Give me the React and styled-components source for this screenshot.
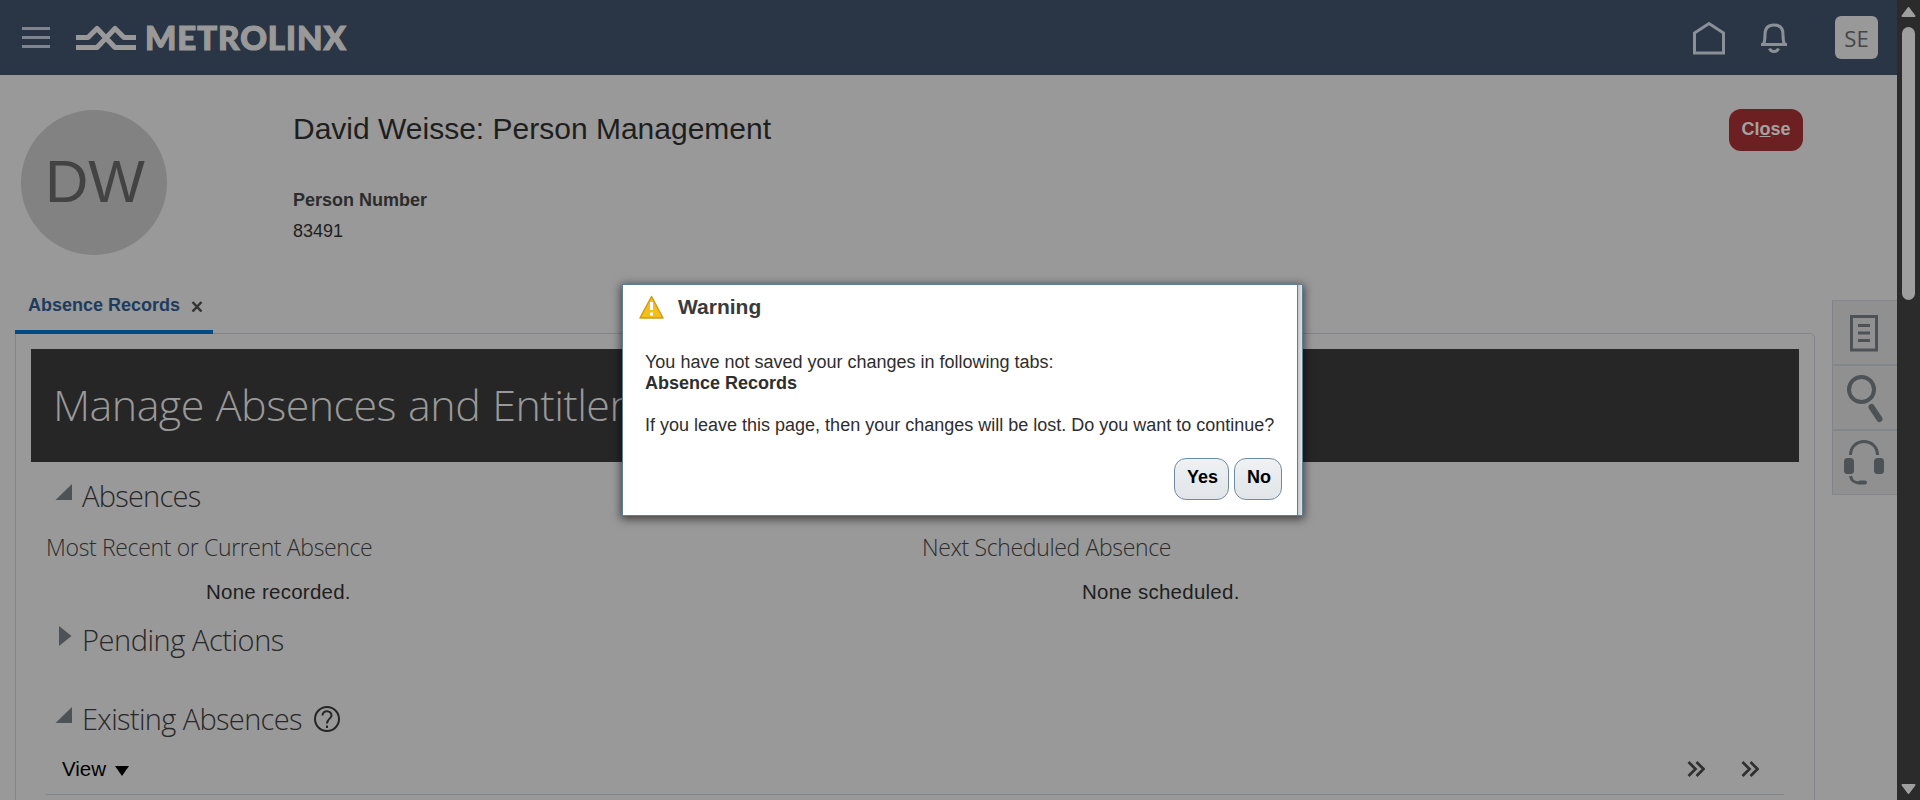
import React from "react";
import styled, { createGlobalStyle } from "styled-components";

const Global = createGlobalStyle`
  * { box-sizing: border-box; }
  html, body { margin: 0; }
  body {
    background: #999;
    color: #1e1e1e;
    font-family: "Liberation Sans", Arial, sans-serif;
    overflow: hidden;
  }
`;

const Screen = styled.div`
  position: relative;
  display: flex;
  width: 1920px;
  height: 800px;
  overflow: hidden;
`;
const Page = styled.div`
  display: flex;
  flex-direction: column;
  width: 1897px;
  background: #999;
`;

const TopBar = styled.header`
  display: flex;
  align-items: center;
  flex: none;
  height: 75px;
  padding: 0 19px 0 22px;
  background: #2a3545;
`;
const Burger = styled.div`
  display: grid;
  gap: 6px;
  width: 28px;
  margin-right: 26px;
`;
const BurgerLine = styled.i`
  height: 3px;
  background: #7f858f;
`;
const Brand = styled.div`
  display: flex;
  align-items: center;
  gap: 9px;
  flex: 1;
`;
const BrandName = styled.span`
  margin-top: -1px;
  color: #999;
  font: 900 33px/40px Lato, sans-serif;
  letter-spacing: ${(p) => p.$track};
  -webkit-text-stroke: 1.2px #999;
  white-space: nowrap;
`;
const TopIcon = styled.svg`
  display: block;
  flex: none;
  margin-right: ${(p) => p.$after}px;
`;
const UserBadge = styled.div`
  display: grid;
  place-items: center;
  width: 43px;
  height: 43px;
  border-radius: 6px;
  background: #999;
  color: #464646;
  font: 22px/1 "Open Sans", sans-serif;
`;

const PersonHeader = styled.section`
  display: flex;
  flex: none;
  height: 210px;
  padding: 35px 94px 0 21px;
`;
const Avatar = styled.div`
  display: flex;
  align-items: center;
  justify-content: center;
  flex: none;
  width: 146px;
  height: 145px;
  margin-right: 126px;
  padding: 0 0 2px 2px;
  border-radius: 50%;
  background: #828282;
  color: #434343;
  font-size: 60px;
`;
const PersonInfo = styled.div`
  flex: 1;
`;
const PersonTitle = styled.h1`
  margin: 1px 0 0;
  font-size: 30px;
  font-weight: 400;
  line-height: 36px;
`;
const FieldLabel = styled.div`
  margin-top: 42px;
  color: #2c2c2c;
  font-size: 18px;
  font-weight: 700;
  line-height: 22px;
`;
const FieldValue = styled.div`
  margin-top: 9px;
  font-size: 18px;
  line-height: 22px;
`;
const CloseButton = styled.button`
  width: 74px;
  height: 42px;
  margin-top: -1px;
  padding: 0 0 2px;
  border: 0;
  border-radius: 12px;
  background: #6c2022;
  color: #a5a2a2;
  font: 700 18px "Liberation Sans", sans-serif;
`;

const Workspace = styled.main`
  display: flex;
  align-items: flex-start;
  flex: 1;
  padding-left: 15px;
`;
const TabColumn = styled.div`
  width: 1800px;
`;
const Tab = styled.div`
  position: relative;
  z-index: 1;
  display: flex;
  width: 162px;
  min-width: 162px;
  height: 49px;
  margin-bottom: -1px;
  padding: 9px 0 0 13px;
  border-bottom: 4px solid #004a85;
  color: #1d3c5e;
  font-size: 18px;
  font-weight: 700;
  line-height: 22px;
  white-space: nowrap;
  width: 198px;
`;
const TabClose = styled.svg`
  flex: none;
  margin: 7px 0 0 11px;
`;
const Panel = styled.div`
  height: 480px;
  padding: 15px 15px 0;
  border: 1px solid #82868a;
  border-top-right-radius: 5px;
`;
const Banner = styled.div`
  height: 113px;
  padding-left: 22px;
  background: #262626;
  color: #999;
  font: 300 43px/111px "Open Sans", "Noto Sans", sans-serif;
  letter-spacing: ${(p) => p.$track};
  word-spacing: 1.5px;
  white-space: nowrap;
`;
const SectionHead = styled.div`
  display: flex;
  align-items: center;
  height: 40px;
  margin-top: ${(p) => p.$before}px;
  padding-left: 24px;
`;
const Marker = styled.svg`
  flex: none;
  width: 18px;
  height: 22px;
  margin: -8px 9px 0 0;
`;
const SectionTitle = styled.h2`
  margin: 0 12px 0 0;
  color: #282828;
  font: 300 29px/40px "Open Sans", "Noto Sans", sans-serif;
  letter-spacing: ${(p) => p.$track};
`;
const AbsenceColumns = styled.div`
  display: grid;
  grid-template-columns: 876px 1fr;
  padding: 13px 0 0 15px;
`;
const SubTitle = styled.h3`
  margin: 0;
  color: #2c2c2c;
  font: 300 23px/36px "Open Sans", "Noto Sans", sans-serif;
  letter-spacing: ${(p) => p.$track};
  white-space: nowrap;
`;
const EmptyNote = styled.p`
  margin: 15px 0 0 160px;
  font-size: 20.5px;
  line-height: 24px;
  letter-spacing: 0.25px;
`;
const TableToolbar = styled.div`
  display: flex;
  align-items: center;
  width: 1738px;
  height: 55px;
  margin: 1px 0 0 15px;
  padding: 3px 25px 0 16px;
  border-bottom: 1px solid #7e858b;
  color: #000;
  font-size: 20.5px;
`;
const ViewMenu = styled.div`
  display: flex;
  align-items: center;
  gap: 9px;
  flex: 1;
`;
const MenuArrow = styled.svg`
  margin-top: 4px;
`;
const Chevrons = styled.svg`
  margin-left: ${(p) => p.$before}px;
`;

const ToolRail = styled.aside`
  width: 65px;
  margin: 15px 0 0 17px;
  border: 1px solid #82868a;
  border-right: 0;
`;
const RailButton = styled.div`
  display: grid;
  height: ${(p) => p.$h}px;
  background: #909090;
  & + & { border-top: 2px solid #82868a; }
`;

const ScrollTrack = styled.div`
  display: flex;
  flex-direction: column;
  align-items: center;
  width: 23px;
  padding: 6px 0 5px;
  background: #2b2b2b;
`;
const ScrollThumb = styled.div`
  width: 13px;
  height: 273px;
  margin-top: 9px;
  margin-bottom: auto;
  border-radius: 7px;
  background: #9f9f9f;
`;

const Dialog = styled.div`
  position: absolute;
  left: 622px;
  top: 284px;
  width: 681px;
  height: 232px;
  padding-right: 4px;
  border: 1px solid #5f7f99;
  background: linear-gradient(90deg, #bcbcbc, #e2e2e2) right / 5px 100% no-repeat #fff;
  box-shadow: 0 2px 9px 1px rgba(0, 0, 0, 0.6);
`;
const DialogBody = styled.div`
  display: flex;
  flex-direction: column;
  height: 230px;
  padding: 9px 15px 0 16px;
  border-right: 1px solid #5f7f99;
  background: #fff;
`;
const DialogHead = styled.div`
  display: flex;
  align-items: center;
  height: 26px;
  gap: 14px;
`;
const DialogTitle = styled.h2`
  margin: 0;
  color: #3a3a3a;
  font-size: 21px;
  line-height: 26px;
`;
const DialogText = styled.p`
  margin: ${(p) => p.$before}px 0 0 6px;
  color: #2e2e2e;
  font-size: 18px;
  font-weight: ${(p) => (p.$strong ? 700 : 400)};
  line-height: 21px;
  white-space: nowrap;
`;
const DialogActions = styled.div`
  display: flex;
  justify-content: flex-end;
  gap: 5px;
  margin-top: 22px;
`;
const DialogButton = styled.button`
  width: ${(p) => p.$w}px;
  height: 42px;
  padding: 0 0 3px 2px;
  border: 1px solid #6f8ba3;
  border-radius: 12px;
  background: linear-gradient(#eff1f2, #e1e5e9);
  color: #000;
  font: 700 18px "Liberation Sans", sans-serif;
`;

const OpenMarker = () => (
  <Marker viewBox="0 0 18 22"><path d="M17 3v16H0.5z" fill="#4d5256" /></Marker>
);
const ClosedMarker = () => (
  <Marker viewBox="0 0 18 22"><path d="M4 1l12.500 10L4 21z" fill="#4d5256" /></Marker>
);
const More = ({ before }) => (
  <Chevrons $before={before} width="18" height="16" fill="none" stroke="#303030" strokeWidth="2.700">
    <path d="M1.500 1l7 7-7 7M9.500 1l7 7-7 7" />
  </Chevrons>
);

export default function App() {
  return (
    <Screen>
      <Global />
      <Page>
        <TopBar>
          <Burger><BurgerLine /><BurgerLine /><BurgerLine /></Burger>
          <Brand>
            <svg width="60" height="26" fill="none" stroke="#999" strokeWidth="5.200" strokeLinejoin="round">
              <path d="M0 12.500h12L21 3.500l18 19h21M0 22.500h21L39 3.500l9 9h12" />
            </svg>
            <BrandName $track="0.95px">METROLINX</BrandName>
          </Brand>
          <TopIcon $after={34} width="34" height="34" fill="none" stroke="#8a9098" strokeWidth="3">
            <path d="M2.500 12L17 2.500 31.500 12v20h-29z" />
          </TopIcon>
          <TopIcon $after={47} width="28" height="32" fill="none" stroke="#8a9098" strokeWidth="3">
            <path d="M1 22.500h26M3.500 22.500C5 19 5 16 5 12.500 5 6 8.500 3 14 3s9 3 9 9.500c0 3.500 0 6.500 1.500 10M9.500 26.500c1.500 4 7.500 4 9 0" />
          </TopIcon>
          <UserBadge>SE</UserBadge>
        </TopBar>

        <PersonHeader>
          <Avatar>DW</Avatar>
          <PersonInfo>
            <PersonTitle>David Weisse: Person Management</PersonTitle>
            <FieldLabel>Person Number</FieldLabel>
            <FieldValue>83491</FieldValue>
          </PersonInfo>
          <CloseButton>Cl<u>o</u>se</CloseButton>
        </PersonHeader>

        <Workspace>
          <TabColumn>
            <Tab>
              Absence Records
              <TabClose width="12" height="11" stroke="#343434" strokeWidth="2.500"><path d="M1.500 1l9 9.500M10.500 1l-9 9.500" /></TabClose>
            </Tab>
            <Panel>
              <Banner $track="-0.55px">Manage Absences and Entitlements</Banner>
              <SectionHead $before={14}>
                <OpenMarker />
                <SectionTitle $track="-0.75px">Absences</SectionTitle>
              </SectionHead>
              <AbsenceColumns>
                <div>
                  <SubTitle $track="-0.35px">Most Recent or Current Absence</SubTitle>
                  <EmptyNote>None recorded.</EmptyNote>
                </div>
                <div>
                  <SubTitle $track="-0.35px">Next Scheduled Absence</SubTitle>
                  <EmptyNote>None scheduled.</EmptyNote>
                </div>
              </AbsenceColumns>
              <SectionHead $before={16}>
                <ClosedMarker />
                <SectionTitle $track="-0.45px">Pending Actions</SectionTitle>
              </SectionHead>
              <SectionHead $before={39}>
                <OpenMarker />
                <SectionTitle $track="-0.65px">Existing Absences</SectionTitle>
                <svg width="26" height="26" fill="none" stroke="#252525" strokeWidth="2">
                  <circle cx="13" cy="13" r="12" />
                  <path d="M8.500 9.500C8.500 3.500 17.500 4 17.500 9.500c0 3-4.500 3.500-4.500 8M13 19.500v2.500" />
                </svg>
              </SectionHead>
              <TableToolbar>
                <ViewMenu>
                  View
                  <MenuArrow width="14" height="10"><path d="M0 0h14L7 10z" fill="#000" /></MenuArrow>
                </ViewMenu>
                <More before={0} />
                <More before={36} />
              </TableToolbar>
            </Panel>
          </TabColumn>

          <ToolRail>
            <RailButton $h={63}>
              <svg width="64" height="63" fill="none" stroke="#4d5256" strokeWidth="3">
                <path d="M18.500 15.500h25v33.500h-25zM25 24.500h12M25 32h12M25 39.500h12" />
              </svg>
            </RailButton>
            <RailButton $h={65}>
              <svg width="64" height="63" fill="none" stroke="#4d5256">
                <circle cx="28.500" cy="23.500" r="12.500" strokeWidth="4" />
                <path d="M38.500 41l8 12" strokeWidth="6" strokeLinecap="round" />
              </svg>
            </RailButton>
            <RailButton $h={65}>
              <svg width="64" height="63" fill="none" stroke="#4d5256" strokeWidth="3">
                <path d="M17.500 24C18 6 44 6 44.500 24M17.500 45c1 6 5 7 10 7" />
                <path d="M27 51.500h5" strokeWidth="4" strokeLinecap="round" />
                <rect x="11" y="27" width="10" height="16" rx="3.500" fill="#4d5256" stroke="none" />
                <rect x="41" y="27" width="10" height="16" rx="3.500" fill="#4d5256" stroke="none" />
              </svg>
            </RailButton>
          </ToolRail>
        </Workspace>
      </Page>

      <ScrollTrack>
        <svg width="15" height="12"><path d="M7.500 2L13.500 10h-12z" fill="#9f9f9f" stroke="#9f9f9f" strokeWidth="2" strokeLinejoin="round" /></svg>
        <ScrollThumb />
        <svg width="15" height="12"><path d="M7.500 10L1.500 2h12z" fill="#9f9f9f" stroke="#9f9f9f" strokeWidth="2" strokeLinejoin="round" /></svg>
      </ScrollTrack>

      <Dialog role="dialog">
        <DialogBody>
          <DialogHead>
            <svg width="25" height="24">
              <path d="M12.500 1.500L24 23H1z" fill="#f6be18" stroke="#cf9a22" strokeWidth="1.500" strokeLinejoin="round" />
              <path d="M12.500 7v8M12.500 17.500v3" stroke="#fff" strokeWidth="3" />
            </svg>
            <DialogTitle>Warning</DialogTitle>
          </DialogHead>
          <DialogText $before={32}>You have not saved your changes in following tabs:</DialogText>
          <DialogText $before={0} $strong>Absence Records</DialogText>
          <DialogText $before={21}>If you leave this page, then your changes will be lost. Do you want to continue?</DialogText>
          <DialogActions>
            <DialogButton $w={55}>Yes</DialogButton>
            <DialogButton $w={48}>No</DialogButton>
          </DialogActions>
        </DialogBody>
      </Dialog>
    </Screen>
  );
}
